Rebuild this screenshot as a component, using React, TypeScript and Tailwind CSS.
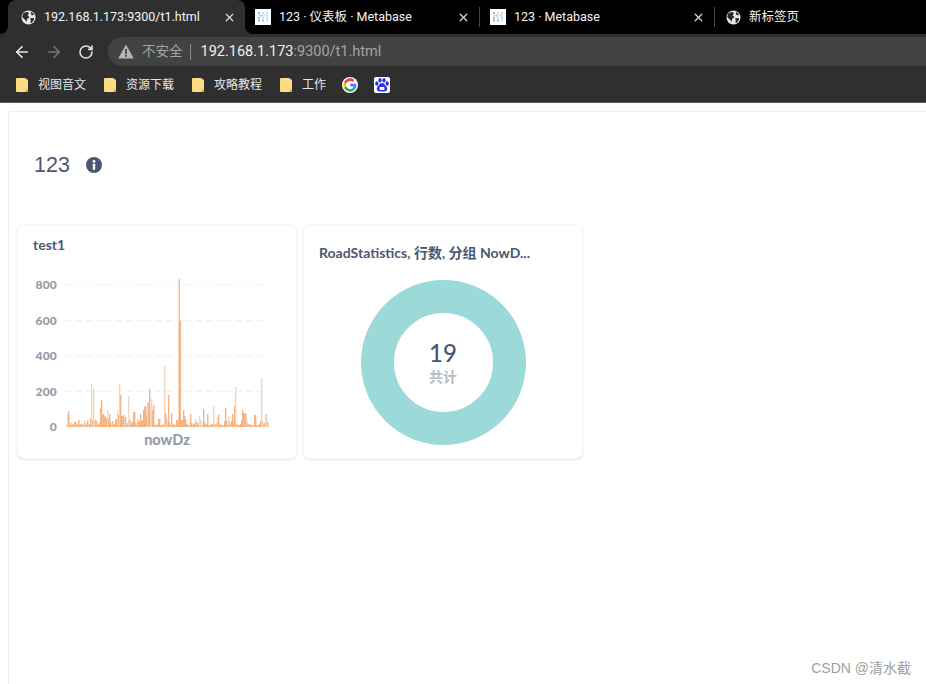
import type { ReactNode } from 'react'
import { ArrowLeft, ArrowRight, RotateCw, X } from 'lucide-react'

const latin = "font-['Lato','Noto_Sans_CJK_SC',sans-serif]"

function Globe({ className = '' }: { className?: string }) {
  return (
    <svg viewBox="0 0 16 16" className={className}>
      <circle cx="8" cy="8" r="7.5" fill="#e6e6e6" />
      <path d="M2.500 3.500 6.500 1.800 8.500 3.500 7 5.500 9 7.500 6.500 9.500 6 12.500 4 10 1.200 7.500Z" fill="#2a2a2a" />
      <path d="M9.500 8.800 13.500 8.500 14 10.500 11 14 10 13 10.500 11Z" fill="#2a2a2a" />
      <path d="M10.500 1.800 13 3.500 13.800 5.500 11 5.300Z" fill="#2a2a2a" />
    </svg>
  )
}

function MetabaseIcon() {
  const cells = [
    [4, 4], [12, 4], [4, 6.500], [6.500, 6.500], [9.500, 6.500], [12, 6.500], [4, 9], [8, 9], [12, 9], [4, 11.500], [12, 11.500], [8, 4], [8, 11.500],
  ]
  return (
    <svg viewBox="0 0 16 16" className="h-4 w-4 shrink-0 bg-white">
      {cells.map(([x, y], i) => (
        <rect key={i} x={x - 1} y={y - 1} width="2" height="2" fill={i % 3 === 0 ? '#8fc0ea' : '#c4def3'} />
      ))}
    </svg>
  )
}

function Tab({ title, icon, active, className, divider }: { title: string; icon: ReactNode; active?: boolean; className: string; divider?: boolean }) {
  return (
    <div className={`relative flex h-full shrink-0 items-center pr-[9px] ${className} ${active ? 'rounded-t-[8px] bg-[#2f2f2f]' : ''}`}>
      {active && (
        <>
          <div className="absolute bottom-0 -left-[8px] h-[8px] w-[8px] bg-[#2f2f2f]">
            <div className="h-full w-full rounded-br-[8px] bg-black" />
          </div>
          <div className="absolute bottom-0 -right-[8px] h-[8px] w-[8px] bg-[#2f2f2f]">
            <div className="h-full w-full rounded-bl-[8px] bg-black" />
          </div>
        </>
      )}
      {icon}
      <span className="ml-[8px] flex-1 truncate text-[12.5px] text-[#f4f4f4]">{title}</span>
      <X size={13} strokeWidth={2.4} className="text-[#d8d8d8]" />
      {divider && <div className="absolute -right-px top-[7px] h-[20px] w-px bg-[#4a4a4a]" />}
    </div>
  )
}

function Folder() {
  return (
    <svg viewBox="0 0 12 14" className="h-[14px] w-[12px] shrink-0">
      <path d="M0 1a1 1 0 0 1 1-1h8l3 2v11a1 1 0 0 1-1 1H1a1 1 0 0 1-1-1Z" fill="#fbdc83" />
      <path d="M9.500 11.500H12V13a1 1 0 0 1-1 1H9.500Z" fill="#e3b341" />
    </svg>
  )
}

function Bookmark({ label, width }: { label: string; width: string }) {
  return (
    <div className={`flex shrink-0 items-center ${width}`}>
      <Folder />
      <span className="ml-[10px] text-[12px] text-[#e8e8e8]">{label}</span>
    </div>
  )
}

// x on the page, height in px above the baseline, 1 = pale bar
const bars: [number, number, number][] = [
  [67, 12, 1], [68, 16, 0], [70, 4, 0], [72, 3, 0], [74, 5, 0], [75, 5, 0], [77, 3, 0], [78, 7, 0], [80, 3, 0], [82, 3, 0], [84, 7, 1], [85, 4, 0],
  [87, 7, 0], [89, 3, 0], [90, 9, 0], [91, 43, 1], [92, 7, 0], [93, 38, 1], [94, 7, 1], [95, 7, 0], [96, 6, 0], [98, 3, 0], [99, 4, 0],
  [100, 19, 0], [101, 27, 0], [102, 12, 0], [103, 13, 0], [104, 11, 0], [105, 10, 0], [106, 8, 0], [107, 17, 1], [108, 8, 0], [109, 13, 0], [110, 5, 0], [112, 6, 0],
  [114, 3, 0], [115, 8, 0], [116, 8, 0], [117, 17, 1], [118, 12, 0], [119, 43, 1], [120, 32, 0], [121, 11, 0], [122, 11, 0], [123, 12, 0], [124, 10, 1], [125, 10, 0],
  [127, 4, 0], [128, 31, 1], [129, 7, 0], [131, 5, 0], [132, 5, 0], [133, 15, 0], [134, 15, 0], [135, 4, 0], [137, 8, 0], [138, 5, 0], [139, 6, 0], [140, 13, 0],
  [141, 6, 0], [142, 7, 0], [143, 17, 0], [144, 20, 0], [145, 21, 0], [146, 12, 0], [147, 25, 1], [148, 24, 0], [149, 38, 0], [150, 15, 1], [151, 28, 1], [152, 17, 0], [153, 22, 0],
  [155, 2, 0], [157, 3, 0], [158, 8, 0], [159, 8, 0], [161, 2, 0], [163, 3, 0], [164, 61, 1], [165, 14, 0], [166, 8, 0], [168, 32, 0], [169, 4, 0], [171, 14, 0],
  [173, 3, 0], [175, 2, 0], [176, 7, 0], [177, 7, 0], [180, 7, 0], [181, 7, 0], [182, 7, 0], [183, 17, 0], [184, 11, 0], [185, 8, 0], [186, 3, 0], [188, 2, 0], [190, 13, 0], [191, 4, 0],
  [193, 3, 0], [194, 4, 0], [195, 8, 1], [196, 5, 0], [197, 4, 0], [199, 11, 1], [200, 7, 1], [201, 6, 1], [203, 18, 0], [204, 5, 0], [205, 3, 0], [207, 13, 0], [209, 2, 0],
  [211, 3, 0], [212, 3, 0], [213, 21, 1], [214, 3, 0], [216, 4, 0], [217, 9, 1], [218, 12, 0], [219, 3, 0], [222, 2, 0], [224, 6, 0], [225, 19, 0], [226, 6, 0], [228, 11, 1], [229, 4, 0],
  [231, 6, 0], [232, 13, 0], [233, 6, 0], [234, 21, 0], [235, 40, 1], [236, 3, 0], [238, 2, 0], [240, 3, 0], [241, 7, 0], [242, 17, 0], [243, 14, 0], [244, 13, 0], [245, 14, 0], [246, 8, 1], [247, 4, 0],
  [249, 3, 0], [251, 2, 0], [254, 12, 0], [255, 12, 0], [256, 2, 0], [259, 3, 0], [260, 6, 0], [261, 49, 1], [262, 5, 0], [264, 4, 0], [265, 13, 1], [266, 13, 1], [267, 5, 0],
]

function BarChart() {
  const base = 172
  return (
    <svg viewBox="0 0 280 200" className="h-[200px] w-[280px]">
      {[30, 65.500, 101, 136.500].map((y) => (
        <line key={y} x1="48" x2="246" y1={y} y2={y} stroke="#f0f1f3" strokeDasharray="6 4" />
      ))}
      <rect x="48" y={base - 2} width="202" height="2" fill="#f6c09a" />
      {bars.map(([x, h, pale]) => (
        <rect key={x} x={x - 18} y={base - h} width="1.400" height={h} fill={pale ? '#eed6c2' : '#f4b484'} />
      ))}
      <rect x="160.500" y="24" width="1.500" height="42" fill="#f3bf98" />
      <rect x="160.500" y="66" width="2.400" height="106" fill="#f7ae77" />
      {[['800', 30], ['600', 66], ['400', 101], ['200', 137], ['0', 172]].map(([label, y]) => (
        <text key={label} x="39" y={Number(y) + 4} textAnchor="end" fontSize="12" fontWeight="900" fill="#949aab" letterSpacing="0.2">
          {label}
        </text>
      ))}
      <text x="149" y="190" textAnchor="middle" fontSize="14.500" fontWeight="900" fill="#949aab">nowDz</text>
    </svg>
  )
}

export default function App() {
  return (
    <div className={`flex h-[684px] w-[926px] flex-col overflow-hidden bg-white ${latin}`}>
      <div className="font-['Roboto','Noto_Sans_CJK_SC',sans-serif]">
        <div className="flex h-[34px] bg-black pl-[8px]">
          <Tab active className="w-[237px] pl-[13px]" title="192.168.1.173:9300/t1.html" icon={<Globe className="h-[15px] w-[15px] shrink-0" />} />
          <Tab className="w-[234px] pl-[10px]" divider title="123 · 仪表板 · Metabase" icon={<MetabaseIcon />} />
          <Tab className="w-[235px] pl-[11px]" divider title="123 · Metabase" icon={<MetabaseIcon />} />
          <div className="flex items-center pl-[12px]">
            <Globe className="h-[15px] w-[15px]" />
            <span className="ml-[8px] text-[12.5px] text-[#f4f4f4]">新标签页</span>
          </div>
        </div>
        <div className="flex h-[34px] items-center bg-[#2f2f2f] pb-[2px] pl-[13px] pt-[3px]">
          <ArrowLeft size={18} strokeWidth={2.2} className="text-[#e8e8e8]" />
          <ArrowRight size={18} strokeWidth={2.2} className="ml-[14px] text-[#757575]" />
          <RotateCw size={16} strokeWidth={2.4} className="ml-[15px] text-[#e0e0e0]" />
          <div className="ml-[14px] flex h-[29px] flex-1 items-center rounded-l-[14px] bg-[#424242] pl-[10px]">
            <svg viewBox="0 0 16 15" className="h-[15px] w-[16px]">
              <path d="M8 .5 15.800 14.500H.2Z" fill="#b5b5b5" />
              <rect x="7.100" y="5" width="1.800" height="5.200" fill="#424242" />
              <rect x="7.100" y="11" width="1.800" height="1.800" fill="#424242" />
            </svg>
            <span className="ml-[8px] text-[13.5px] text-[#a5a5a5]">不安全</span>
            <div className="ml-[7px] mr-[10px] h-[16px] w-px bg-[#8a8a8a]" />
            <span className="text-[14.500px] text-[#f0f0f0]">192.168.1.173<span className="text-[#a5a5a5]">:9300/t1.html</span></span>
          </div>
        </div>
        <div className="flex h-[35px] items-center border-b border-[#5a5a5a] bg-[#2f2f2f] pl-[16px]">
          <Bookmark label="视图音文" width="w-[88px]" />
          <Bookmark label="资源下载" width="w-[88px]" />
          <Bookmark label="攻略教程" width="w-[88px]" />
          <Bookmark label="工作" width="w-[62px]" />
          <svg viewBox="0 0 48 48" className="h-4 w-4 shrink-0">
            <circle cx="24" cy="24" r="24" fill="#fff" />
            <path d="M43 24.500c0-1.400-.1-2.700-.4-4H24v7.600h10.700c-.5 2.500-1.900 4.600-4 6l6.200 4.800C40.500 35.600 43 30.500 43 24.500Z" fill="#4285f4" />
            <path d="M24 44c5.400 0 9.900-1.800 13-4.800l-6.200-4.800c-1.700 1.200-4 1.900-6.800 1.900-5.200 0-9.600-3.500-11.200-8.200l-6.400 5C9.700 39.400 16.300 44 24 44Z" fill="#34a853" />
            <path d="M12.800 28.100c-.8-2.600-.8-5.500 0-8.200l-6.400-5c-2.700 5.500-2.700 12.700 0 18.200Z" fill="#fbbc05" />
            <path d="M24 11.800c2.900 0 5.500 1 7.500 2.900l5.600-5.600C33.700 5.900 29.300 4 24 4 16.300 4 9.700 8.600 6.400 14.900l6.400 5c1.600-4.700 6-8.100 11.200-8.100Z" fill="#ea4335" />
          </svg>
          <svg viewBox="0 0 16 16" className="ml-[16px] h-4 w-4 shrink-0 rounded-[2px] bg-white">
            <ellipse cx="2.800" cy="6.500" rx="1.600" ry="2.200" fill="#2932e1" />
            <ellipse cx="6" cy="3.200" rx="1.600" ry="2.200" fill="#2932e1" />
            <ellipse cx="10" cy="3.200" rx="1.600" ry="2.200" fill="#2932e1" />
            <ellipse cx="13.200" cy="6.500" rx="1.600" ry="2.200" fill="#2932e1" />
            <path d="M8 6c2.200 0 3 2.200 4.500 3.800s.5 5-2.500 4.700c-1.200-.1-2.800-.1-4 0-3 .3-4-3.100-2.500-4.700S5.800 6 8 6Z" fill="#2932e1" />
            <rect x="5.500" y="10" width="5" height="3" rx="1" fill="#fff" />
          </svg>
        </div>
      </div>

      <div className="relative ml-[8px] mt-[8px] flex-1 rounded-tl-[4px] border-l border-t border-[#eeeeee]">
        <div className="flex items-center pl-[25px] pt-[40px]">
          <h1 className="text-[21.500px] leading-[26px] text-[#4c5773] font-['Liberation_Sans',sans-serif]">123</h1>
          <svg viewBox="0 0 16 16" className="ml-[16px] h-4 w-4">
            <circle cx="8" cy="8" r="8" fill="#4c5773" />
            <rect x="6.800" y="6.800" width="2.400" height="6" rx="0.500" fill="#fff" />
            <circle cx="8" cy="4.400" r="1.400" fill="#fff" />
          </svg>
        </div>

        <div className="mt-[46px] flex gap-[6px] pl-[8px]">
          <div className="h-[235px] w-[280px] overflow-hidden rounded-[8px] border border-[#f8f8f8] bg-white shadow-[0_1px_3px_rgba(0,0,0,0.11)]">
            <div className="pb-[1px] pl-[15px] pt-[11px] text-[14px] font-bold leading-[18px] text-[#4c5773]">test1</div>
            <BarChart />
          </div>
          <div className="flex h-[235px] w-[280px] flex-col items-center rounded-[8px] border border-[#f8f8f8] bg-white shadow-[0_1px_3px_rgba(0,0,0,0.11)]">
            <div className="w-full pl-[15px] pt-[19px] text-[14px] font-bold leading-[18px] text-[#4c5773]">RoadStatistics, 行数, 分组 NowD...</div>
            <div className="mt-[18px] flex h-[165px] w-[165px] flex-col items-center justify-center rounded-full border-[33px] border-[#9cd9d9] pt-[1px]">
              <span className="mb-[1px] text-[24px] font-medium leading-[26px] text-[#4c5773]">19</span>
              <span className="text-[14px] font-bold leading-[20px] text-[#b8bbc3]">共计</span>
            </div>
          </div>
        </div>

        <div className="absolute right-[15px] top-[546px] text-[14px] text-[#a0a0a0] font-['Liberation_Sans','Noto_Sans_CJK_SC',sans-serif]">CSDN @清水截</div>
      </div>
    </div>
  )
}
